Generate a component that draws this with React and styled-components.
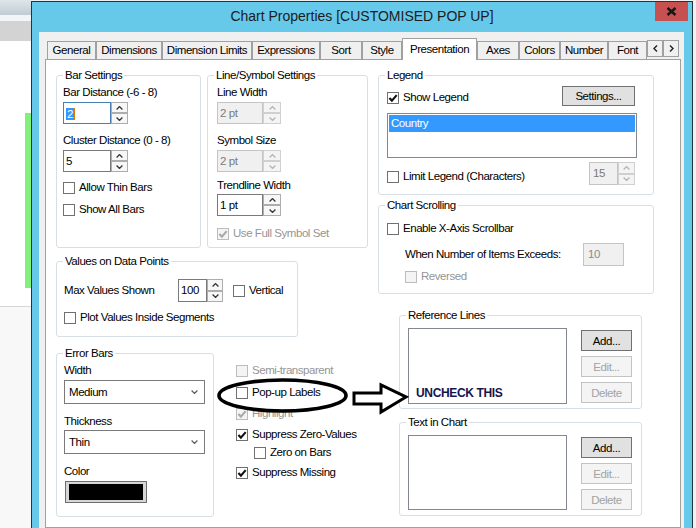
import React from "react";
import styled, { createGlobalStyle } from "styled-components";

const GlobalStyle = createGlobalStyle`
  html, body { margin: 0; padding: 0; background: #f0f0f0; }
  body { overflow: hidden; }
  *, *::before, *::after { box-sizing: border-box; }
`;

const UI_FONT = `"Liberation Sans", Arial, Helvetica, sans-serif`;

const Screen = styled.div`
  display: flex;
  width: 696px;
  height: 528px;
  overflow: hidden;
  font-family: ${UI_FONT};
  background: #f0f0f0;
`;

/* ---------- host application behind the dialog ---------- */
const Backdrop = styled.div`
  width: 31px;
  flex: none;
  display: flex;
  flex-direction: column;
`;
const HostTitle = styled.div`
  height: 15px;
  background: linear-gradient(#dfe6ea, #c0cbd2);
`;
const HostSeam = styled.div`
  height: 6px;
  background: #f2f4f5;
`;
const HostToolbar = styled.div`
  height: 20px;
  background: #d3d3d3;
`;
const HostCanvas = styled.div`
  height: 265px;
  background: #fff;
  padding: 72px 0 0 25px;
`;
const GreenBar = styled.div`
  width: 6px;
  height: 175px;
  background: #80f27c;
`;
const HostDivider = styled.div`
  height: 1px;
  background: #d6d6d6;
`;
const HostFooter = styled.div`
  flex: 1;
  background: #f8f8f8;
`;
const RightEdge = styled.div`
  flex: 1;
  background: #f0f0f0;
`;

/* ---------- dialog window ---------- */
const Window = styled.div`
  width: 662px;
  height: 527px;
  flex: none;
  margin-top: 1px;
  border: 1px solid #1f3540;
  border-bottom: none;
  background: #66c9ea;
  display: flex;
  flex-direction: column;
`;
const TitleBar = styled.div`
  height: 30px;
  flex: none;
  display: grid;
  grid-template-columns: 1fr auto 1fr;
  align-items: start;
`;
const Title = styled.div`
  grid-column: 2;
  font-size: 14px;
  line-height: 28px;
  color: #1c1c1c;
  white-space: nowrap;
`;
const CloseButton = styled.div`
  grid-column: 3;
  justify-self: end;
  margin-right: 4px;
  width: 33px;
  height: 19px;
  background: #c75050;
  display: flex;
  align-items: center;
  justify-content: center;
`;
const DialogBody = styled.div`
  flex: 1;
  margin: 0 8px 0 7px;
  background: #f0f0f0;
  padding: 6px 3px 0 6px;
  display: flex;
  flex-direction: column;
  font-size: 11.5px;
  letter-spacing: -0.45px;
  color: #000;
`;

/* ---------- tabs ---------- */
const TabStrip = styled.div`
  height: 21px;
  flex: none;
  display: flex;
  align-items: flex-end;
  padding-left: 2px;
`;
const Tab = styled.div`
  width: ${(p) => p.$w}px;
  flex: none;
  height: ${(p) => (p.$active ? 22 : 18)}px;
  margin-bottom: ${(p) => (p.$active ? -1 : 0)}px;
  padding-top: ${(p) => (p.$active ? 2 : 0)}px;
  border: 1px solid #a0a0a0;
  border-bottom: none;
  background: ${(p) => (p.$active ? "#fff" : "#f0f0f0")};
  text-align: center;
  line-height: 17px;
  white-space: nowrap;
  position: relative;
  z-index: ${(p) => (p.$active ? 1 : 0)};
`;
const TabScroll = styled.div`
  width: 16px;
  height: 17px;
  flex: none;
  align-self: flex-start;
  margin-top: 2px;
  border: 1px solid #a0a0a0;
  background: #f0f0f0;
  display: flex;
  align-items: center;
  justify-content: center;
  color: #222;
`;
const TabPage = styled.div`
  flex: 1;
  position: relative;
  background: #fff;
  border: 1px solid #a0a0a0;
  display: flex;
  align-items: flex-start;
  gap: 10px;
  padding: 15px 0 0 10px;
`;

/* ---------- layout columns ---------- */
const LeftColumn = styled.div`
  width: 312px;
  flex: none;
  display: flex;
  flex-direction: column;
`;
const RightColumn = styled.div`
  width: 276px;
  flex: none;
  display: flex;
  flex-direction: column;
  align-items: flex-start;
`;
const GroupRow = styled.div`
  display: flex;
  align-items: flex-start;
  gap: ${(p) => p.$gap || 0}px;
  margin-top: ${(p) => p.$mt || 0}px;
`;
const OptionColumn = styled.div`
  display: flex;
  flex-direction: column;
  align-items: flex-start;
  margin-left: 22px;
  padding-top: 11px;
`;

/* ---------- group boxes ---------- */
const GroupBox = styled.div`
  width: ${(p) => p.$w}px;
  height: ${(p) => p.$h}px;
  flex: none;
  margin-top: ${(p) => p.$mt || 0}px;
  margin-left: ${(p) => p.$ml || 0}px;
  border: 1px solid #d5dfe5;
  border-radius: 3px;
  display: flex;
  flex-direction: column;
`;
const Caption = styled.div`
  align-self: flex-start;
  margin: -7px 0 0 6px;
  padding: 0 2px;
  background: #fff;
  line-height: 13px;
  white-space: nowrap;
`;
const GroupBody = styled.div`
  display: flex;
  flex-direction: ${(p) => (p.$row ? "row" : "column")};
  align-items: flex-start;
  padding-left: ${(p) => p.$pl || 0}px;
  padding-right: ${(p) => p.$pr || 0}px;
  margin-top: ${(p) => p.$mt || 0}px;
`;
const FieldLabel = styled.div`
  line-height: 13px;
  white-space: nowrap;
  margin-top: ${(p) => p.$mt || 0}px;
  width: ${(p) => (p.$w ? `${p.$w}px` : "auto")};
  flex: none;
`;
const FieldRow = styled.div`
  display: flex;
  align-items: ${(p) => p.$align || "center"};
  justify-content: ${(p) => p.$justify || "flex-start"};
  align-self: stretch;
  margin-top: ${(p) => p.$mt || 0}px;
  margin-left: ${(p) => p.$ml || 0}px;
`;

/* ---------- check boxes ---------- */
const CheckRow = styled.div`
  display: flex;
  align-items: center;
  gap: 4px;
  height: 13px;
  line-height: 13px;
  white-space: nowrap;
  flex: none;
  margin-top: ${(p) => p.$mt || 0}px;
  margin-left: ${(p) => p.$ml || 0}px;
  color: ${(p) => (p.$disabled ? "#959595" : "#000")};
`;
const CheckBox = styled.span`
  width: 12px;
  height: 12px;
  flex: none;
  border: 1px solid ${(p) => (p.$disabled ? "#bcbcbc" : "#707070")};
  background: ${(p) => (p.$disabled ? "#f4f4f4" : "#fff")};
  color: ${(p) => (p.$disabled ? "#a9a9a9" : "#111")};
  display: flex;
  align-items: center;
  justify-content: center;
`;

const CheckItem = ({ label, checked, disabled, mt, ml }) => (
  <CheckRow $mt={mt} $ml={ml} $disabled={disabled}>
    <CheckBox $disabled={disabled}>
      {checked && (
        <svg width="10" height="10" viewBox="0 0 10 10">
          <path d="M1.4 5 L3.9 7.6 L8.7 2.1" fill="none" stroke="currentColor" strokeWidth="2.1" />
        </svg>
      )}
    </CheckBox>
    <span>{label}</span>
  </CheckRow>
);

/* ---------- spinners / inputs ---------- */
const Chevron = ({ dir = "down", w = 7, h = 4 }) => (
  <svg width={w} height={h} viewBox="0 0 7 4">
    <polyline
      points={dir === "up" ? "0.6,3.5 3.5,0.6 6.4,3.5" : "0.6,0.5 3.5,3.4 6.4,0.5"}
      fill="none"
      stroke="currentColor"
      strokeWidth="1.3"
    />
  </svg>
);

const SpinWrap = styled.div`
  display: flex;
  flex: none;
  margin-top: ${(p) => p.$mt || 0}px;
`;
const SpinField = styled.div`
  width: ${(p) => p.$w}px;
  height: ${(p) => p.$h}px;
  border: 1px solid
    ${(p) => (p.$focused ? "#4a7fb5" : p.$disabled ? "#c4c4c4" : "#7a7a7a")};
  background: ${(p) => (p.$disabled ? "#f0f0f0" : "#fff")};
  color: ${(p) => (p.$disabled ? "#7a7a7a" : "#000")};
  padding-left: ${(p) => p.$pad ?? 2}px;
  line-height: ${(p) => p.$h - 2}px;
  white-space: nowrap;
`;
const SpinButtons = styled.div`
  width: ${(p) => p.$w}px;
  height: ${(p) => p.$h}px;
  display: flex;
  flex-direction: column;
`;
const SpinArrow = styled.div`
  flex: 1;
  border: 1px solid ${(p) => (p.$disabled ? "#d0d0d0" : "#adadad")};
  background: ${(p) => (p.$disabled ? "#f4f4f4" : "#f7f7f7")};
  color: ${(p) => (p.$disabled ? "#b4b4b4" : "#333")};
  display: flex;
  align-items: center;
  justify-content: center;
`;
const SelectedValue = styled.span`
  display: inline-block;
  line-height: 12px;
  padding: 0 1px;
  background: #3399ff;
  color: #fff;
  border-right: 1px solid #e07b00;
  vertical-align: middle;
`;

const Spinner = ({ value, w, sw = 17, h = 22, mt, disabled, focused, children }) => (
  <SpinWrap $mt={mt}>
    <SpinField $w={w} $h={h} $disabled={disabled} $focused={focused}>
      {children ?? value}
    </SpinField>
    <SpinButtons $w={sw} $h={h}>
      <SpinArrow $disabled={disabled}>
        <Chevron dir="up" />
      </SpinArrow>
      <SpinArrow $disabled={disabled}>
        <Chevron dir="down" />
      </SpinArrow>
    </SpinButtons>
  </SpinWrap>
);

const Combo = styled.div`
  width: 141px;
  height: 24px;
  flex: none;
  margin-top: ${(p) => p.$mt || 0}px;
  border: 1px solid #7a7a7a;
  background: #fff;
  display: flex;
  align-items: center;
  justify-content: space-between;
  padding: 0 6px 0 4px;
  color: #000;
  svg { color: #606060; }
`;
const ColorSwatch = styled.div`
  width: 82px;
  height: 22px;
  flex: none;
  margin: 3px 0 0 1px;
  border: 1px solid #6f6f6f;
  background: #d6d6d6;
  padding: 2px 3px;
`;
const SwatchFill = styled.div`
  width: 100%;
  height: 100%;
  background: #000;
`;

/* ---------- buttons & lists ---------- */
const PushButton = styled.div`
  width: ${(p) => p.$w}px;
  height: ${(p) => p.$h}px;
  flex: none;
  margin-right: ${(p) => p.$mr || 0}px;
  border: 1px solid ${(p) => (p.$disabled ? "#c3c3c3" : "#707070")};
  background: ${(p) => (p.$disabled ? "#f4f4f4" : "#e1e1e1")};
  color: ${(p) => (p.$disabled ? "#a3a3a3" : "#000")};
  display: flex;
  align-items: center;
  justify-content: center;
  white-space: nowrap;
`;
const ButtonStack = styled.div`
  display: flex;
  flex-direction: column;
  gap: 5px;
  margin: 2px 0 0 14px;
`;
const ListBox = styled.div`
  width: ${(p) => p.$w}px;
  height: ${(p) => p.$h}px;
  flex: none;
  margin-top: ${(p) => p.$mt || 0}px;
  border: 1px solid #828790;
  background: #fff;
  padding: 1px;
  display: flex;
  flex-direction: column;
  justify-content: ${(p) => (p.$bottom ? "flex-end" : "flex-start")};
`;
const ListItem = styled.div`
  height: 17px;
  line-height: 17px;
  padding-left: 2px;
  background: #3399ff;
  color: #fff;
`;
const AnnotationText = styled.div`
  font-size: 12px;
  font-weight: bold;
  letter-spacing: -0.35px;
  line-height: 13px;
  color: #15154d;
  padding: 0 0 2px 6px;
`;
const DisabledField = styled.div`
  width: 41px;
  height: 23px;
  flex: none;
  border: 1px solid #c4c4c4;
  background: #f0f0f0;
  color: #8a8a8a;
  padding-left: 4px;
  line-height: 21px;
`;

const Annotation = styled.svg`
  position: absolute;
  left: 0;
  top: 0;
  pointer-events: none;
`;

const TABS = [
  ["General", 49],
  ["Dimensions", 66],
  ["Dimension Limits", 90],
  ["Expressions", 68],
  ["Sort", 42],
  ["Style", 40],
  ["Presentation", 75],
  ["Axes", 42],
  ["Colors", 41],
  ["Number", 48],
  ["Font", 39],
];

export default function App() {
  return (
    <>
      <GlobalStyle />
      <Screen>
        <Backdrop>
          <HostTitle />
          <HostSeam />
          <HostToolbar />
          <HostCanvas>
            <GreenBar />
          </HostCanvas>
          <HostDivider />
          <HostFooter />
        </Backdrop>

        <Window>
          <TitleBar>
            <Title>Chart Properties [CUSTOMISED POP UP]</Title>
            <CloseButton>
              <svg width="11" height="9" viewBox="0 0 11 9">
                <path d="M1.5 1 L9.5 8 M9.5 1 L1.5 8" stroke="#161616" strokeWidth="2.4" />
              </svg>
            </CloseButton>
          </TitleBar>

          <DialogBody>
            <TabStrip>
              {TABS.map(([label, w]) => (
                <Tab key={label} $w={w} $active={label === "Presentation"}>
                  {label}
                </Tab>
              ))}
              <TabScroll>
                <svg width="5" height="7" viewBox="0 0 5 7">
                  <polyline points="4,0.6 1,3.5 4,6.4" fill="none" stroke="currentColor" strokeWidth="1.4" />
                </svg>
              </TabScroll>
              <TabScroll>
                <svg width="5" height="7" viewBox="0 0 5 7">
                  <polyline points="1,0.6 4,3.5 1,6.4" fill="none" stroke="currentColor" strokeWidth="1.4" />
                </svg>
              </TabScroll>
            </TabStrip>

            <TabPage>
              <LeftColumn>
                <GroupRow $gap={6}>
                  <GroupBox $w={145} $h={173}>
                    <Caption>Bar Settings</Caption>
                    <GroupBody $pl={6}>
                      <FieldLabel $mt={4}>Bar Distance (-6 - 8)</FieldLabel>
                      <Spinner mt={3} w={48} focused>
                        <SelectedValue>2</SelectedValue>
                      </Spinner>
                      <FieldLabel $mt={10}>Cluster Distance (0 - 8)</FieldLabel>
                      <Spinner mt={3} w={48} value="5" />
                      <CheckItem mt={9} label="Allow Thin Bars" />
                      <CheckItem mt={9} label="Show All Bars" />
                    </GroupBody>
                  </GroupBox>

                  <GroupBox $w={161} $h={173}>
                    <Caption>Line/Symbol Settings</Caption>
                    <GroupBody $pl={9}>
                      <FieldLabel $mt={4}>Line Width</FieldLabel>
                      <Spinner mt={3} w={46} sw={18} value="2 pt" disabled />
                      <FieldLabel $mt={10}>Symbol Size</FieldLabel>
                      <Spinner mt={3} w={46} sw={18} value="2 pt" disabled />
                      <FieldLabel $mt={7}>Trendline Width</FieldLabel>
                      <Spinner mt={2} w={46} sw={18} value="1 pt" />
                      <CheckItem mt={11} label="Use Full Symbol Set" checked disabled />
                    </GroupBody>
                  </GroupBox>
                </GroupRow>

                <GroupBox $w={242} $h={76} $mt={13}>
                  <Caption>Values on Data Points</Caption>
                  <GroupBody $pl={7}>
                    <FieldRow $mt={11}>
                      <FieldLabel $w={114}>Max Values Shown</FieldLabel>
                      <Spinner w={29} sw={16} h={23} value="100" />
                      <CheckItem ml={10} label="Vertical" />
                    </FieldRow>
                    <CheckItem mt={9} label="Plot Values Inside Segments" />
                  </GroupBody>
                </GroupBox>

                <GroupRow $mt={16}>
                  <GroupBox $w={158} $h={164}>
                    <Caption>Error Bars</Caption>
                    <GroupBody $pl={7}>
                      <FieldLabel $mt={4}>Width</FieldLabel>
                      <Combo $mt={3}>
                        <span>Medium</span>
                        <Chevron dir="down" />
                      </Combo>
                      <FieldLabel $mt={11}>Thickness</FieldLabel>
                      <Combo $mt={2}>
                        <span>Thin</span>
                        <Chevron dir="down" />
                      </Combo>
                      <FieldLabel $mt={11}>Color</FieldLabel>
                      <ColorSwatch>
                        <SwatchFill />
                      </ColorSwatch>
                    </GroupBody>
                  </GroupBox>

                  <OptionColumn>
                    <CheckItem label="Semi-transparent" disabled />
                    <CheckItem mt={9} label="Pop-up Labels" />
                    <CheckItem mt={8} label="Highlight" checked disabled />
                    <CheckItem mt={8} label="Suppress Zero-Values" checked />
                    <CheckItem mt={5} ml={18} label="Zero on Bars" />
                    <CheckItem mt={7} label="Suppress Missing" checked />
                  </OptionColumn>
                </GroupRow>
              </LeftColumn>

              <RightColumn>
                <GroupBox $w={276} $h={120}>
                  <Caption>Legend</Caption>
                  <GroupBody $pl={8} $pr={16}>
                    <FieldRow $mt={4} $align="flex-start" $justify="space-between">
                      <CheckItem mt={5} label="Show Legend" checked />
                      <PushButton $w={73} $h={20} $mr={2}>
                        Settings...
                      </PushButton>
                    </FieldRow>
                    <ListBox $w={250} $h={45} $mt={7}>
                      <ListItem>Country</ListItem>
                    </ListBox>
                    <FieldRow $mt={4} $align="flex-start" $justify="space-between">
                      <CheckItem mt={8} label="Limit Legend (Characters)" />
                      <SpinWrap style={{ marginRight: 2 }}>
                        <SpinField $w={29} $h={23} $disabled $pad={3}>
                          15
                        </SpinField>
                        <SpinButtons $w={17} $h={23}>
                          <SpinArrow $disabled>
                            <Chevron dir="up" />
                          </SpinArrow>
                          <SpinArrow $disabled>
                            <Chevron dir="down" />
                          </SpinArrow>
                        </SpinButtons>
                      </SpinWrap>
                    </FieldRow>
                  </GroupBody>
                </GroupBox>

                <GroupBox $w={276} $h={89} $mt={10}>
                  <Caption>Chart Scrolling</Caption>
                  <GroupBody $pl={8}>
                    <CheckItem mt={10} label="Enable X-Axis Scrollbar" />
                    <FieldRow $mt={8} $ml={18}>
                      <FieldLabel $w={178}>When Number of Items Exceeds:</FieldLabel>
                      <DisabledField>10</DisabledField>
                    </FieldRow>
                    <CheckItem mt={4} ml={18} label="Reversed" disabled />
                  </GroupBody>
                </GroupBox>

                <GroupBox $w={243} $h={94} $mt={21} $ml={21}>
                  <Caption>Reference Lines</Caption>
                  <GroupBody $row $pl={8} $mt={6}>
                    <ListBox $w={159} $h={76} $bottom>
                      <AnnotationText>UNCHECK THIS</AnnotationText>
                    </ListBox>
                    <ButtonStack>
                      <PushButton $w={51} $h={21}>Add...</PushButton>
                      <PushButton $w={51} $h={21} $disabled>Edit...</PushButton>
                      <PushButton $w={51} $h={21} $disabled>Delete</PushButton>
                    </ButtonStack>
                  </GroupBody>
                </GroupBox>

                <GroupBox $w={243} $h={94} $mt={13} $ml={21}>
                  <Caption>Text in Chart</Caption>
                  <GroupBody $row $pl={8} $mt={6}>
                    <ListBox $w={159} $h={75} />
                    <ButtonStack>
                      <PushButton $w={51} $h={21}>Add...</PushButton>
                      <PushButton $w={51} $h={21} $disabled>Edit...</PushButton>
                      <PushButton $w={51} $h={21} $disabled>Delete</PushButton>
                    </ButtonStack>
                  </GroupBody>
                </GroupBox>
              </RightColumn>

              <Annotation width="634" height="470" viewBox="46 60 634 470">
                <ellipse cx="282.5" cy="395.5" rx="63.5" ry="15.5" fill="none" stroke="#000" strokeWidth="3.6" />
                <polygon
                  points="354,393 381,393 381,385 406,397 381,412 381,404 354,404"
                  fill="#fff"
                  stroke="#000"
                  strokeWidth="3"
                  strokeLinejoin="miter"
                />
              </Annotation>
            </TabPage>
          </DialogBody>
        </Window>
        <RightEdge />
      </Screen>
    </>
  );
}
